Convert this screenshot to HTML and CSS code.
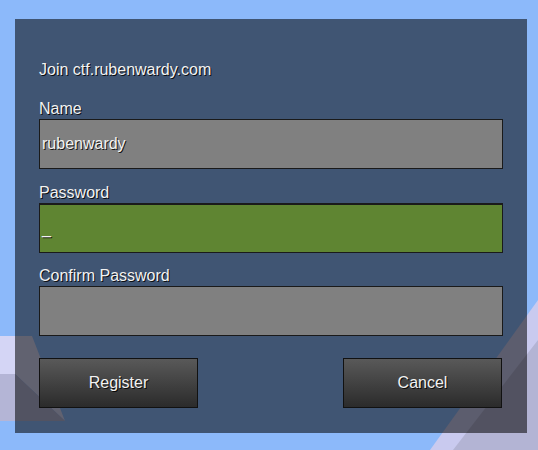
FILE: index.html
```html
<!DOCTYPE html>
<html lang="en">
<head>
<meta charset="utf-8">
<title>Join ctf.rubenwardy.com</title>
<link rel="stylesheet" href="styles.css">
</head>
<body>
<svg class="backdrop" width="538" height="450" viewBox="0 0 538 450" aria-hidden="true">
  <rect x="0" y="0" width="538" height="450" fill="#8cb9fa"/>
  <polygon points="0,336 32,336 65,421 15,374 0,374" fill="#d4d5f5"/>
  <polygon points="0,374 15,374 65,421 0,421" fill="#b4b5d6"/>
  <polygon points="430,450 538,300 538,450" fill="#c9caef"/>
  <polygon points="453,450 538,340 538,450" fill="#b3b4d4"/>
</svg>
<div class="panel">
  <div class="title">Join ctf.rubenwardy.com</div>
  <div class="field">
    <div class="label">Name</div>
    <div class="input">rubenwardy</div>
  </div>
  <div class="field">
    <div class="label">Password</div>
    <div class="input input-focus">_</div>
  </div>
  <div class="field field-last">
    <div class="label">Confirm Password</div>
    <div class="input"></div>
  </div>
  <div class="actions">
    <div class="btn">Register</div>
    <div class="btn">Cancel</div>
  </div>
</div>
</body>
</html>
```
FILE: styles.css
```css
html, body {
  margin: 0;
  padding: 0;
}
body {
  width: 538px;
  height: 450px;
  overflow: hidden;
  position: relative;
  font-family: "Liberation Sans", Arial, sans-serif;
  font-size: 16px;
  color: #f2f2f2;
  text-shadow: 1px 1px 0 rgba(0, 0, 0, 0.85);
}
.backdrop {
  position: absolute;
  left: 0;
  top: 0;
  display: block;
}
.panel {
  position: relative;
  margin: 19px 0 0 15px;
  width: 512px;
  height: 414px;
  box-sizing: border-box;
  padding: 41px 24px 25px 24px;
  background: rgba(0, 0, 0, 0.54);
  display: flex;
  flex-direction: column;
}
.title {
  line-height: 20px;
  height: 18px;
  margin-bottom: 21px;
}
.field {
  display: flex;
  flex-direction: column;
  gap: 2px;
  margin-bottom: 14px;
}
.field-last {
  margin-bottom: 22px;
}
.field + .field-last {
  margin-top: -1px;
}
.label {
  line-height: 20px;
  height: 18px;
}
.input {
  height: 50px;
  box-sizing: border-box;
  border: 1px solid #1a1a1a;
  background: #808080;
  padding-left: 2px;
  display: flex;
  align-items: center;
  line-height: 18px;
}
.input-focus {
  background: #5f8532;
  border-top: 2px solid #1a1a1a;
}
.actions {
  display: flex;
  justify-content: space-between;
  padding-right: 1px;
}
.btn {
  width: 159px;
  height: 50px;
  box-sizing: border-box;
  border: 1px solid #111;
  background: linear-gradient(#595959, #2b2b2b);
  display: flex;
  align-items: center;
  justify-content: center;
  line-height: 18px;
}
```
